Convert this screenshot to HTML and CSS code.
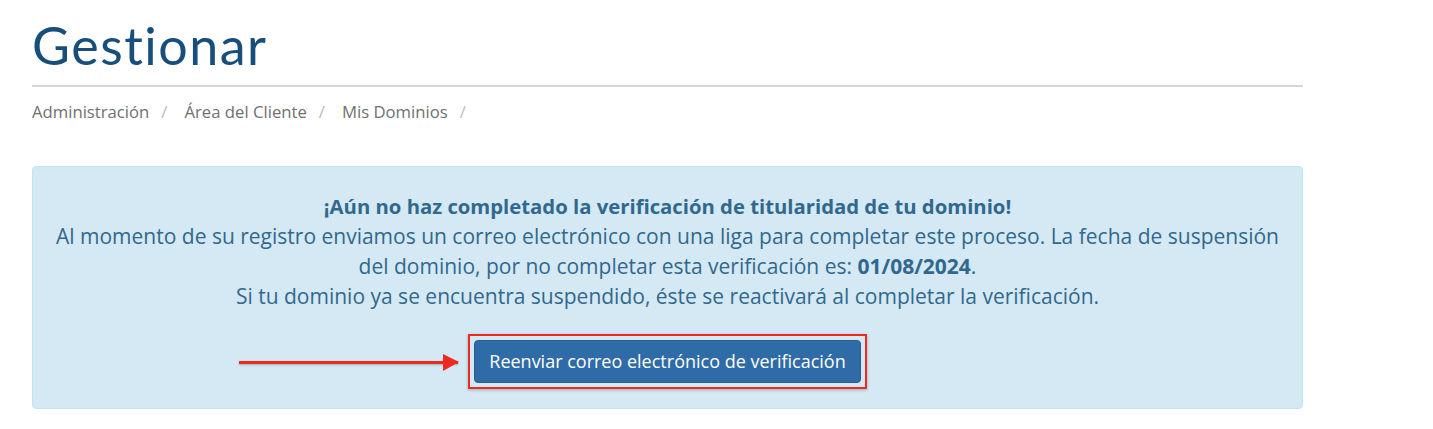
FILE: index.html
```html
<!doctype html>
<html lang="es">
  <head>
    <meta charset="UTF-8" />
    <meta name="viewport" content="width=device-width, initial-scale=1.0" />
    <title>Gestionar</title>
    <link rel="stylesheet" href="styles.css">
  </head>
  <body>
    <div class="container">
      <header class="page-header">
        <h1>Gestionar</h1>
      </header>

      <ol class="breadcrumb">
        <li><a href="#">Administración</a></li>
        <li><a href="#">Área del Cliente</a></li>
        <li><a href="#">Mis Dominios</a></li>
      </ol>

      <div class="alert alert-info">
        <p>
          <strong class="alert-title">¡Aún no haz completado la verificación de titularidad de tu dominio!</strong><br />
          Al momento de su registro enviamos un correo electrónico con una liga para completar este proceso. La fecha de suspensión del dominio, por no completar esta verificación es: <strong>01/08/2024</strong>.<br />
          Si tu dominio ya se encuentra suspendido, éste se reactivará al completar la verificación.
        </p>

        <div class="actions">
          <div class="highlight">
            <span class="pointer"></span>
            <button class="btn btn-primary" type="button">Reenviar correo electrónico de verificación</button>
          </div>
        </div>
      </div>
    </div>
  </body>
</html>
```

FILE: styles.css
```css
* {
  margin: 0;
  padding: 0;
  box-sizing: border-box;
}

body {
  font-family: "Open Sans", "Liberation Sans", sans-serif;
  background: #fff;
  color: #333;
}

.container {
  width: 1271px;
  margin-left: 32px;
}

.page-header {
  border-bottom: 2px solid #d6d6d6;
  padding-top: 13px;
  padding-bottom: 8px;
}

h1 {
  font-family: "Lato", "Open Sans", sans-serif;
  font-weight: 400;
  font-size: 52px;
  line-height: 64px;
  color: #174e7c;
  letter-spacing: 1.5px;
}

.breadcrumb {
  list-style: none;
  display: flex;
  padding-top: 13px;
  font-size: 16.7px;
  line-height: 24px;
}

.breadcrumb li::after {
  content: "/";
  color: #bbb;
  padding: 0 17px 0 12px;
}

.breadcrumb a {
  color: #707070;
  text-decoration: none;
}

.alert {
  margin-top: 42px;
  border: 1px solid #bce8f1;
  border-radius: 4px;
  padding: 24px 20px 19px;
}

.alert-info {
  background: #d4e9f4;
  color: #31688e;
}

.alert p {
  text-align: center;
  font-size: 21px;
  line-height: 30px;
}

.alert strong {
  font-weight: 700;
}

.alert .alert-title {
  font-size: 20.3px;
}

.actions {
  display: flex;
  justify-content: center;
  margin-top: 23px;
}

.highlight {
  position: relative;
  border: 2px solid #ee2a1e;
  padding: 4px;
  box-shadow: 0 1px 3px rgba(0, 0, 0, 0.25);
}

.pointer {
  position: absolute;
  right: calc(100% + 12px);
  top: 50%;
  width: 219px;
  height: 3px;
  margin-top: -1px;
  background: #ee2a1e;
  box-shadow: 0 1px 2px rgba(0, 0, 0, 0.25);
}

.pointer::after {
  content: "";
  position: absolute;
  right: -1px;
  top: -7px;
  border-left: 16px solid #ee2a1e;
  border-top: 8px solid transparent;
  border-bottom: 9px solid transparent;
}

.btn {
  display: block;
  font-family: "Open Sans", "Liberation Sans", sans-serif;
  font-size: 18px;
  line-height: 23px;
  padding: 9px 14px;
  border-radius: 4px;
  cursor: pointer;
}

.btn-primary {
  background: #2f6ca7;
  border: 1px solid #285f94;
  color: #fff;
}
```
